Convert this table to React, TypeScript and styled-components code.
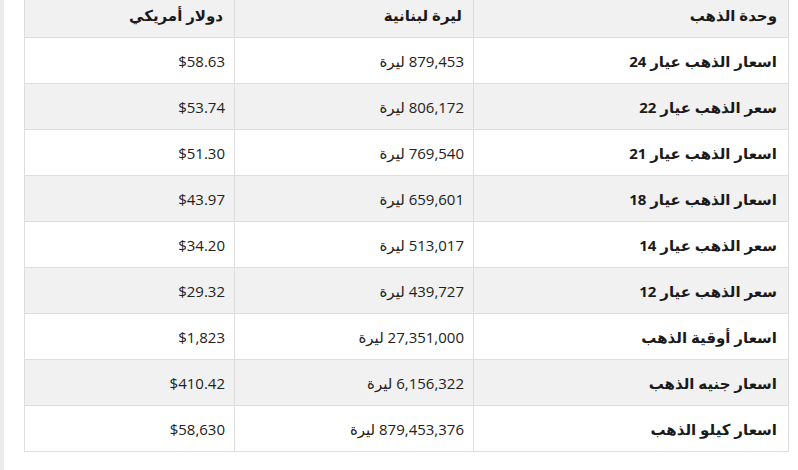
import React from "react";
import styled, { createGlobalStyle } from "styled-components";

const Global = createGlobalStyle`
  html, body { margin: 0; padding: 0; background: #fff; }
  body { font-family: "Open Sans", "DejaVu Sans", sans-serif; color: #222; }
`;

const Page = styled.div`
  display: flex;
  width: 798px;
  height: 470px;
  overflow: hidden;
`;

const Side = styled.div`
  width: 4px;
  background: #ebebeb;
  flex: none;
`;

const Main = styled.div`
  flex: 1;
  padding-left: 20px;
  padding-right: 10px;
`;

const Table = styled.table`
  direction: rtl;
  width: 764px;
  border-collapse: collapse;
  margin-top: -9px;
  table-layout: fixed;
  font-size: 15px;
`;

const Th = styled.th<{ $w: number }>`
  box-sizing: border-box;
  width: ${(p) => p.$w}px;
  height: 46px;
  padding: 0 11px 0 8px;
  text-align: right;
  font-weight: 700;
  color: #1a1a1a;
  background: #f1f1f1;
  border: 1px solid #ddd;
`;

const Tr = styled.tr<{ $alt: boolean }>`
  background: ${(p) => (p.$alt ? "#f1f1f1" : "#fff")};
`;

const Td = styled.td<{ $bold?: boolean }>`
  box-sizing: border-box;
  height: 46px;
  padding: 0 9px 0 8px;
  text-align: right;
  border: 1px solid #ddd;
  white-space: nowrap;
  font-weight: ${(p) => (p.$bold ? 700 : 400)};
  color: ${(p) => (p.$bold ? "#1a1a1a" : "#222")};
  padding-right: ${(p) => (p.$bold ? "11px" : "9px")};
`;

const rows: [string, string, string][] = [
  ["اسعار الذهب عيار 24", "879,453 ليرة", "$58.63"],
  ["سعر الذهب عيار 22", "806,172 ليرة", "$53.74"],
  ["اسعار الذهب عيار 21", "769,540 ليرة", "$51.30"],
  ["اسعار الذهب عيار 18", "659,601 ليرة", "$43.97"],
  ["سعر الذهب عيار 14", "513,017 ليرة", "$34.20"],
  ["سعر الذهب عيار 12", "439,727 ليرة", "$29.32"],
  ["اسعار أوقية الذهب", "27,351,000 ليرة", "$1,823"],
  ["اسعار جنيه الذهب", "6,156,322 ليرة", "$410.42"],
  ["اسعار كيلو الذهب", "879,453,376 ليرة", "$58,630"],
];

export default function App() {
  return (
    <>
      <Global />
      <Page>
        <Side />
        <Main>
          <Table>
            <thead>
              <tr>
                <Th $w={315}>وحدة الذهب</Th>
                <Th $w={239}>ليرة لبنانية</Th>
                <Th $w={210}>دولار أمريكي</Th>
              </tr>
            </thead>
            <tbody>
              {rows.map((r, i) => (
                <Tr key={i} $alt={i % 2 === 1}>
                  <Td $bold>{r[0]}</Td>
                  <Td>{r[1]}</Td>
                  <Td dir="ltr">{r[2]}</Td>
                </Tr>
              ))}
            </tbody>
          </Table>
        </Main>
      </Page>
    </>
  );
}
